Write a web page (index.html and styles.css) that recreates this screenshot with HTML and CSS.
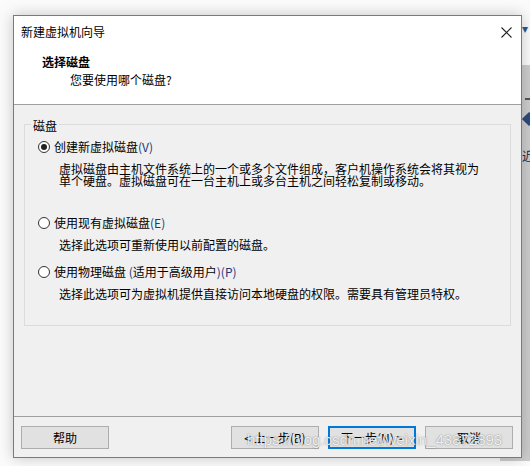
FILE: index.html
```html
<!DOCTYPE html>
<html lang="zh-CN">
<head>
<meta charset="utf-8">
<title>新建虚拟机向导</title>
<link rel="stylesheet" href="styles.css">
</head>
<body>
<div class="bgwin">
  <div class="bg-mark"></div>
  <div class="bg-arrow"></div>
  <div class="bg-char">近</div>
</div>
<div class="bg-top">▾</div>
<div class="desk">
  <div class="dialog">
    <div class="titlebar">
      <span class="title">新建虚拟机向导</span>
      <svg class="close" width="11" height="11" viewBox="0 0 11 11"><path d="M0.5 0.5 L10.5 10.5 M10.5 0.5 L0.5 10.5" stroke="#222" stroke-width="1.1" fill="none"/></svg>
    </div>
    <div class="header">
      <div class="h-main">选择磁盘</div>
      <div class="h-sub">您要使用哪个磁盘?</div>
    </div>
    <div class="body">
      <fieldset class="group">
        <legend class="legend">磁盘</legend>
        <div class="opt opt-first">
          <span class="radio checked"></span>
          <span class="label">创建新虚拟磁盘<span class="mn">(V)</span></span>
        </div>
        <div class="desc">虚拟磁盘由主机文件系统上的一个或多个文件组成，客户机操作系统会将其视为<br>单个硬盘。虚拟磁盘可在一台主机上或多台主机之间轻松复制或移动。</div>
        <div class="opt opt-second">
          <span class="radio"></span>
          <span class="label">使用现有虚拟磁盘<span class="mn">(E)</span></span>
        </div>
        <div class="desc">选择此选项可重新使用以前配置的磁盘。</div>
        <div class="opt opt-third">
          <span class="radio"></span>
          <span class="label">使用物理磁盘 <span class="mn">(</span>适用于高级用户<span class="mn">)(P)</span></span>
        </div>
        <div class="desc">选择此选项可为虚拟机提供直接访问本地硬盘的权限。需要具有管理员特权。</div>
      </fieldset>
    </div>
    <div class="buttons">
      <button class="btn">帮助</button>
      <button class="btn btn-back">&lt; 上一步(B)</button>
      <button class="btn btn-default">下一步(N) &gt;</button>
      <button class="btn">取消</button>
    </div>
  </div>
</div>
<div class="watermark">https://blog.csdn.net/weixin_43872893</div>
</body>
</html>
```

FILE: styles.css
```css
html, body {
  margin: 0;
  padding: 0;
}
body {
  width: 530px;
  height: 466px;
  background: #fbfbfb;
  font-family: "Noto Sans CJK SC", "Noto Sans", sans-serif;
  font-size: 12px;
  color: #000;
  position: relative;
  overflow: hidden;
}
.bgwin {
  position: absolute;
  left: 500px;
  top: 65px;
  width: 40px;
  height: 396px;
  background: #cdcdcd;
}
.bg-mark {
  position: absolute;
  left: 25px;
  top: 33px;
  width: 8px;
  height: 2px;
  background: #555;
}
.bg-arrow {
  position: absolute;
  left: 24px;
  top: 49px;
  width: 10px;
  height: 10px;
  background: #2d4a7a;
  transform: rotate(45deg);
}
.bg-char {
  position: absolute;
  left: 22px;
  top: 83px;
  font-size: 12px;
  line-height: 16px;
  color: #1a2a50;
}
.bg-top {
  position: absolute;
  left: 522px;
  top: 20px;
  font-size: 12px;
  line-height: 16px;
  color: #2b5797;
}
.desk {
  padding: 15px 0 0 13px;
  position: relative;
}
.dialog {
  box-sizing: border-box;
  width: 509px;
  height: 443px;
  border: 1px solid #7a7a7a;
  background: #f0f0f0;
  box-shadow: 0 0 14px rgba(0, 0, 0, 0.22);
  display: flex;
  flex-direction: column;
}
.titlebar {
  height: 31px;
  background: #fff;
  display: flex;
  align-items: center;
  justify-content: space-between;
  padding: 1px 9px 0 7px;
  box-sizing: border-box;
}
.title {
  line-height: 16px;
  color: #000;
}
.close {
  display: block;
}
.header {
  height: 58px;
  box-sizing: border-box;
  background: #fff;
  border-bottom: 1px solid #a0a0a0;
  padding: 6px 0 0 28px;
}
.h-main {
  font-weight: bold;
  line-height: 18px;
}
.h-sub {
  line-height: 18px;
  padding-left: 28px;
}
.body {
  height: 312px;
  box-sizing: border-box;
  border-bottom: 1px solid #a0a0a0;
  padding: 9px 10px 0 10px;
}
.group {
  margin: 0;
  padding: 0 0 25px 13px;
  border: 1px solid #dcdcdc;
  min-inline-size: 0;
}
.legend {
  margin-left: -7px;
  padding: 4px 2px 0 2px;
  line-height: 16px;
}
.opt {
  display: flex;
  align-items: center;
  height: 16px;
  line-height: 16px;
}
.opt-first { margin-top: 5px; }
.opt-second { margin-top: 28px; }
.opt-third { margin-top: 13px; }
.radio {
  box-sizing: border-box;
  width: 12px;
  height: 12px;
  border: 1px solid #333;
  border-radius: 50%;
  background: #fff;
  margin-right: 4px;
  display: flex;
  align-items: center;
  justify-content: center;
}
.radio.checked::after {
  content: "";
  width: 6px;
  height: 6px;
  border-radius: 50%;
  background: #222;
}
.mn {
  color: #22347a;
}
.desc {
  margin: 8px 0 0 21px;
  line-height: 12px;
}
.buttons {
  flex: 1;
  display: flex;
  align-items: flex-start;
  padding: 9px 8px 0 7px;
}
.btn {
  box-sizing: border-box;
  width: 88px;
  height: 23px;
  margin: 0;
  padding: 0;
  background: #e1e1e1;
  border: 1px solid #adadad;
  font-family: "Noto Sans CJK SC", "Noto Sans", sans-serif;
  font-size: 12px;
  line-height: 16px;
  color: #000;
}
.btn + .btn {
  margin-left: 9px;
}
.btn.btn-back {
  margin-left: auto;
}
.btn-default {
  border: 1px solid #0078d7;
  box-shadow: inset 0 0 0 1px #0078d7;
}
.watermark {
  position: absolute;
  left: 247px;
  top: 431px;
  font-family: "Liberation Sans", Arial, sans-serif;
  font-size: 15px;
  line-height: 18px;
  color: rgba(255, 255, 255, 0.85);
  text-shadow: 0 0 1.5px rgba(90, 90, 90, 0.8);
  white-space: nowrap;
}
```
